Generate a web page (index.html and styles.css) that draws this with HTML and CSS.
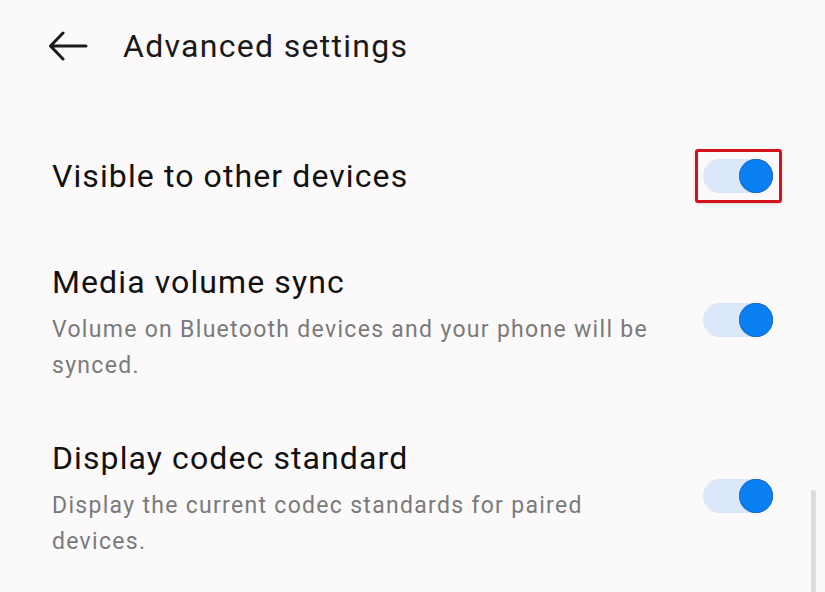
FILE: index.html
```html
<!DOCTYPE html>
<html lang="en">
<head>
<meta charset="utf-8">
<title>Advanced settings</title>
<link rel="stylesheet" href="styles.css">
</head>
<body>
<div class="screen">
  <header class="header">
    <svg class="back" width="40" height="30" viewBox="0 0 40 30" aria-hidden="true">
      <path d="M38 15H3M15 2L2.5 15L15 28" fill="none" stroke="#1a1a1a" stroke-width="3" stroke-linecap="round" stroke-linejoin="round"/>
    </svg>
    <h1 class="title">Advanced settings</h1>
  </header>

  <div class="row row-first">
    <div class="text">
      <div class="label">Visible to other devices</div>
    </div>
    <span class="highlight"><span class="toggle"><span class="knob"></span></span></span>
  </div>

  <div class="row row-second">
    <div class="text">
      <div class="label">Media volume sync</div>
      <div class="desc">Volume on Bluetooth devices and your phone will be synced.</div>
    </div>
    <span class="toggle"><span class="knob"></span></span>
  </div>

  <div class="row row-third">
    <div class="text">
      <div class="label">Display codec standard</div>
      <div class="desc">Display the current codec standards for paired devices.</div>
    </div>
    <span class="toggle"><span class="knob"></span></span>
  </div>

  <div class="scrollbar"></div>
</div>
</body>
</html>
```

FILE: styles.css
```css
* { box-sizing: border-box; }
html, body {
  margin: 0;
  padding: 0;
  background: #fbf9fa;
}
body {
  font-family: Roboto, "Noto Sans", "Liberation Sans", sans-serif;
  width: 825px;
  height: 592px;
  overflow: hidden;
}
.screen {
  position: relative;
  width: 825px;
  height: 592px;
  padding: 0 52px;
}
.header {
  display: flex;
  align-items: center;
  gap: 35px;
  padding-top: 26px;
  margin-left: -4px;
}
.back { display: block; flex: none; }
.title {
  margin: 0;
  font-size: 32px;
  line-height: 40px;
  font-weight: 400;
  letter-spacing: 1.3px;
  color: #1a1a1a;
}
.row {
  display: flex;
  align-items: center;
  justify-content: space-between;
}
.row-first { margin-top: 83px; }
.row-second { margin-top: 59px; }
.row-third { margin-top: 54px; }
.text { flex: 1; min-width: 0; }
.label {
  font-size: 32px;
  line-height: 40px;
  letter-spacing: 1.1px;
  color: #111;
}
.desc {
  margin-top: 10px;
  font-size: 23px;
  line-height: 36px;
  letter-spacing: 1.3px;
  color: #7a7a7a;
  max-width: 610px;
}
.toggle {
  position: relative;
  display: block;
  flex: none;
  width: 70px;
  height: 34px;
  border-radius: 17px;
  background: #dbe8fa;
  margin-left: 40px;
  margin-bottom: 6px;
}
.knob {
  position: absolute;
  right: 0;
  top: 0;
  width: 34px;
  height: 34px;
  border-radius: 50%;
  background: #0a7ff2;
  box-shadow: inset 0 0 0 1px #1d6fd2;
}
.highlight {
  display: block;
  flex: none;
  padding: 7px 6px 7px 5px;
  border: 3px solid #d3121c;
  border-radius: 3px;
  margin-right: -9px;
  box-shadow: 0 1px 3px rgba(0,0,0,0.15);
}
.highlight .toggle { margin: 0; }
.scrollbar {
  position: absolute;
  right: 9px;
  top: 490px;
  width: 5px;
  height: 102px;
  background: #dcdcdc;
  border-radius: 2px 2px 0 0;
}
```
